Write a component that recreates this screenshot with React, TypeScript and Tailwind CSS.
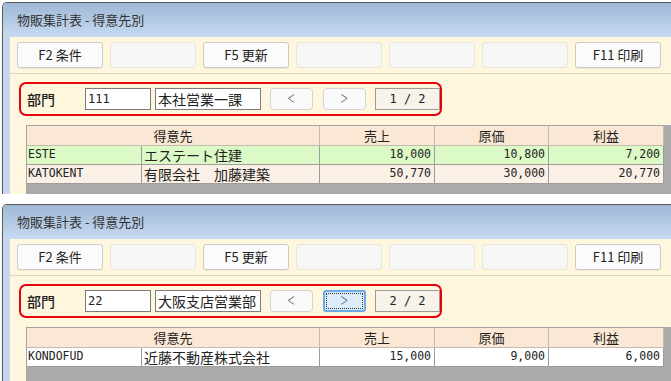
type Row = {
  code: string;
  name: string;
  sales: string;
  cost: string;
  profit: string;
  tone: "green" | "peach" | "white";
};

type PanelProps = {
  deptCode: string;
  deptName: string;
  page: string;
  rows: Row[];
  nextFocused?: boolean;
  gridHeight: string;
};

const toolButtons = ["F2 条件", "", "F5 更新", "", "", "", "F11 印刷"];

const rowTone = {
  green: "bg-[#dbfac6]",
  peach: "bg-[#fbf0e6]",
  white: "bg-white",
};

function ToolButton({ label }: { label: string }) {
  if (!label) {
    return <div className="h-[26px] w-[86px] rounded-[3px] border border-[#e7e5df] bg-[#f6f6f5]" />;
  }
  return (
    <div className="flex h-[26px] w-[86px] items-center justify-center rounded-[3px] border border-[#cbcbcb] bg-[#fbfbfb] text-[13px] text-[#222] shadow-[0_1px_0_rgba(0,0,0,0.06)]">
      {label}
    </div>
  );
}

function NavButton({ label, focused }: { label: string; focused?: boolean }) {
  const glyph = (
    <span className="inline-block scale-x-[0.55] pb-[2px] font-['DejaVu_Sans',sans-serif] text-[17px] leading-none font-extralight text-[#444]">
      {label}
    </span>
  );
  if (focused) {
    return (
      <div className="flex h-[22px] w-[43px] items-center justify-center rounded-[3px] border-2 border-[#6aaae6] bg-[#dcecfb] p-[1px]">
        <div className="flex h-full w-full items-center justify-center border border-dotted border-[#333]">{glyph}</div>
      </div>
    );
  }
  return (
    <div className="flex h-[22px] w-[43px] items-center justify-center rounded-[4px] border border-[#d2d2d2] bg-[#fafafa]">
      {glyph}
    </div>
  );
}

function Panel({ deptCode, deptName, page, rows, nextFocused, gridHeight }: PanelProps) {
  return (
    <div className="ml-[2px] flex flex-col overflow-hidden rounded-tl-[5px] border-l border-t border-[#5a5a5a] font-['Noto_Sans_CJK_JP','Noto_Sans',sans-serif]">
      {/* title bar */}
      <div className="flex h-[34px] items-center bg-linear-to-b from-[#9fb8d6] to-[#c7daf0] pl-[14px] text-[13px] text-[#333]">
        物販集計表 - 得意先別
      </div>

      <div className="flex">
        <div className="w-[7px] shrink-0 bg-[#c4d7ee]" />

        <div className="flex flex-1 flex-col bg-[#fef7dd]">
          {/* function keys */}
          <div className="flex h-[37px] gap-[7px] border-b border-[#dcd5c2] pl-[7px] pt-[5px]">
            {toolButtons.map((label, i) => (
              <ToolButton key={i} label={label} />
            ))}
          </div>

          {/* department selector */}
          <div className="pl-[9px] pt-[8px]">
            <div className="flex h-[34px] w-[423px] items-center rounded-[7px] border-2 border-[#e6000c] pl-[6px]">
              <div className="w-[58px] text-[14px] font-medium text-[#222]">部門</div>
              <div className="flex h-[22px] w-[66px] items-center border border-[#7c7c7c] bg-white pl-[2px] font-['DejaVu_Sans_Mono',monospace] text-[12px] text-[#222]">
                {deptCode}
              </div>
              <div className="ml-[4px] flex h-[22px] w-[106px] items-center border border-[#7c7c7c] bg-white pl-[2px] text-[14px] text-[#222]">
                {deptName}
              </div>
              <div className="ml-[9px]">
                <NavButton label="<" />
              </div>
              <div className="ml-[10px]">
                <NavButton label=">" focused={nextFocused} />
              </div>
              <div className="ml-[9px] flex h-[22px] w-[65px] items-center justify-center border border-[#9a9a9a] bg-[#f7f3eb] font-['DejaVu_Sans_Mono',monospace] text-[12px] text-[#222]">
                {page}
              </div>
            </div>
          </div>

          {/* grid */}
          <div className={`ml-[16px] mt-[9px] bg-[#ababab] ${gridHeight}`}>
            <div className="grid w-[637px] grid-cols-[115px_178px_115px_114px_115px] border-l border-t border-[#a3a3a3] text-[#222]">
              <div className="col-span-2 flex h-[20px] items-center justify-center border-b border-r border-[#c4bab0] bg-[#fbe8d4] text-[13px]">
                得意先
              </div>
              <div className="flex h-[20px] items-center justify-center border-b border-r border-[#c4bab0] bg-[#fbe8d4] text-[13px]">
                売上
              </div>
              <div className="flex h-[20px] items-center justify-center border-b border-r border-[#c4bab0] bg-[#fbe8d4] text-[13px]">
                原価
              </div>
              <div className="flex h-[20px] items-center justify-center border-b border-r border-[#c4bab0] bg-[#fbe8d4] text-[13px]">
                利益
              </div>

              {rows.map((row) => (
                <div key={row.code} className="contents">
                  <div className={`flex h-[19px] items-center border-b border-r border-[#9d9d9d] pl-[1px] font-['DejaVu_Sans_Mono',monospace] text-[11.5px] ${rowTone[row.tone]}`}>
                    {row.code}
                  </div>
                  <div className={`flex h-[19px] items-center whitespace-pre border-b border-r border-[#9d9d9d] pl-[2px] text-[14px] ${rowTone[row.tone]}`}>
                    {row.name}
                  </div>
                  <div className={`flex h-[19px] items-center justify-end border-b border-r border-[#9d9d9d] pr-[3px] font-['DejaVu_Sans_Mono',monospace] text-[11.5px] ${rowTone[row.tone]}`}>
                    {row.sales}
                  </div>
                  <div className={`flex h-[19px] items-center justify-end border-b border-r border-[#9d9d9d] pr-[3px] font-['DejaVu_Sans_Mono',monospace] text-[11.5px] ${rowTone[row.tone]}`}>
                    {row.cost}
                  </div>
                  <div className={`flex h-[19px] items-center justify-end border-b border-r border-[#9d9d9d] pr-[3px] font-['DejaVu_Sans_Mono',monospace] text-[11.5px] ${rowTone[row.tone]}`}>
                    {row.profit}
                  </div>
                </div>
              ))}
            </div>
          </div>
        </div>
      </div>
    </div>
  );
}

export default function App() {
  return (
    <div className="h-[381px] w-[671px] overflow-hidden bg-white pt-[2px]">
      <Panel
        deptCode="111"
        deptName="本社営業一課"
        page="1 / 2"
        gridHeight="h-[69px]"
        rows={[
          { code: "ESTE", name: "エステート住建", sales: "18,000", cost: "10,800", profit: "7,200", tone: "green" },
          { code: "KATOKENT", name: "有限会社　加藤建築", sales: "50,770", cost: "30,000", profit: "20,770", tone: "peach" },
        ]}
      />
      <div className="h-[10px]" />
      <Panel
        deptCode="22"
        deptName="大阪支店営業部"
        page="2 / 2"
        nextFocused
        gridHeight="h-[70px]"
        rows={[
          { code: "KONDOFUD", name: "近藤不動産株式会社", sales: "15,000", cost: "9,000", profit: "6,000", tone: "white" },
        ]}
      />
    </div>
  );
}
